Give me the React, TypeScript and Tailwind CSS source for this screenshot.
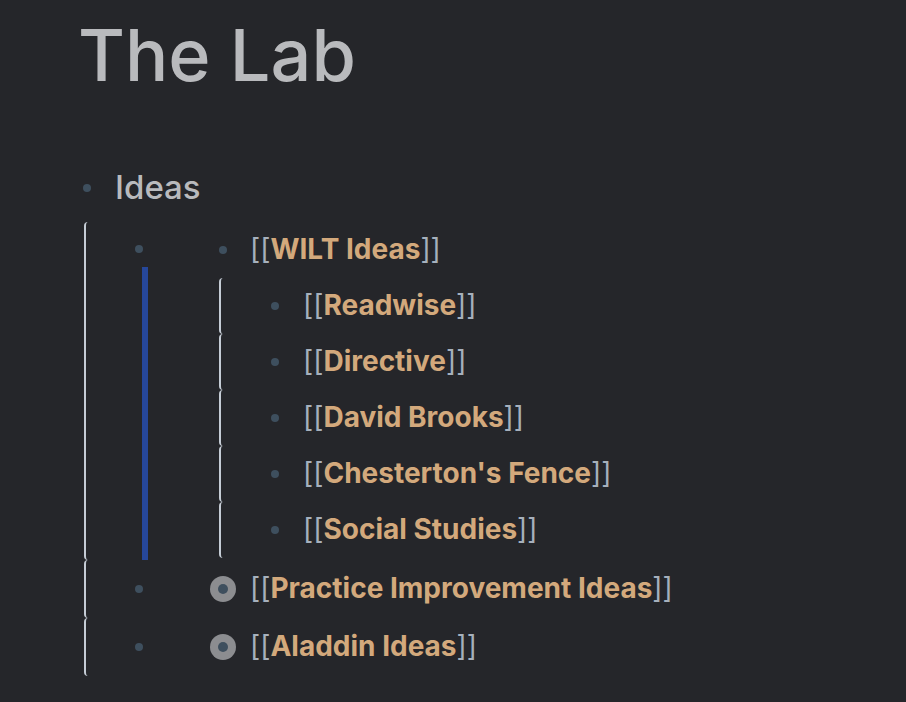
import { FC } from "react";

const Dot: FC = () => <span className="block w-[8px] h-[8px] rounded-full bg-[#3e4f5e]" />;

const Ring: FC = () => (
  <span className="flex w-[26px] h-[26px] rounded-full bg-[#8c8d90] items-center justify-center">
    <span className="block w-[10px] h-[10px] rounded-full bg-[#3e4f5e]" />
  </span>
);

const Link: FC<{ title: string }> = ({ title }) => (
  <span className="text-[28px] leading-none whitespace-nowrap">
    <span className="text-[#a6b0bc]">[[</span>
    <span className="font-bold text-[#d3a97c]">{title}</span>
    <span className="text-[#a6b0bc]">]]</span>
  </span>
);

const wilt = ["Readwise", "Directive", "David Brooks", "Chesterton's Fence", "Social Studies"];

export default function App() {
  return (
    <div className="min-h-screen bg-[#25262a] pl-[80px] pt-[19px]" style={{ fontFamily: "Inter, 'Noto Sans', sans-serif" }}>
      {/* Page title */}
      <h1 className="text-[72px] font-medium leading-none text-[#b9babd] h-[141px] -ml-[2px]">The Lab</h1>

      {/* Ideas */}
      <div className="flex items-center h-[56px]">
        <div className="w-[35px] pl-[3px]">
          <Dot />
        </div>
        <span className="text-[33px] font-medium text-[#b9babd]">Ideas</span>
      </div>

      <div className="ml-[4px] mt-[6px]">
        {/* WILT Ideas with children */}
        <div className="flex border-l-2 border-[#c5ccd5] rounded-l-[4px]">
          <div className="w-[124px] flex flex-col">
            <div className="h-[45px] flex items-end pb-[14px] pl-[49px]">
              <Dot />
            </div>
            <div className="ml-[56px] w-[6px] flex-1 bg-[#26479a]" />
          </div>
          <div className="flex flex-col">
            <div className="flex items-center h-[56px]">
              <div className="w-[26px] flex justify-center">
                <Dot />
              </div>
              <span className="ml-[14px]">
                <Link title="WILT Ideas" />
              </span>
            </div>
            <div className="ml-[9px] mb-[2px]">
              {wilt.map((t) => (
                <div key={t} className="flex items-center h-[56px] border-l-2 border-[#c5ccd5] rounded-l-[4px]">
                  <span className="ml-[50px]">
                    <Dot />
                  </span>
                  <span className="ml-[24px]">
                    <Link title={t} />
                  </span>
                </div>
              ))}
            </div>
          </div>
        </div>

        {/* Collapsed siblings */}
        {["Practice Improvement Ideas", "Aladdin Ideas"].map((t) => (
          <div key={t} className="flex items-center h-[58px] border-l-2 border-[#c5ccd5] rounded-l-[4px]">
            <div className="w-[124px] pl-[49px]">
              <Dot />
            </div>
            <Ring />
            <span className="ml-[14px]">
              <Link title={t} />
            </span>
          </div>
        ))}
      </div>
    </div>
  );
}
